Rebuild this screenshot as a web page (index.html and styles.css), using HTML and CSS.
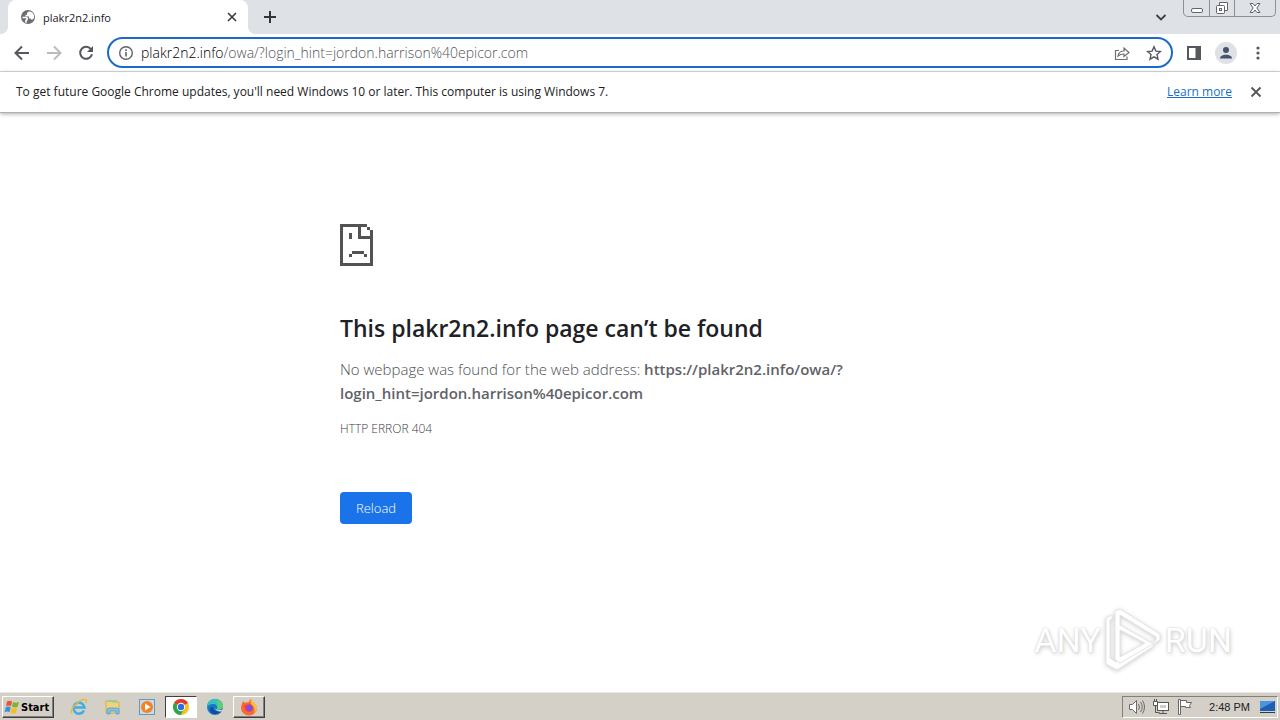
FILE: index.html
```html
<!DOCTYPE html>
<html lang="en">
<head>
<meta charset="utf-8">
<meta name="viewport" content="width=device-width, initial-scale=1">
<title>plakr2n2.info</title>
<link rel="stylesheet" href="styles.css">
</head>
<body>
<header>
  <div class="tabstrip">
    <div class="tab">
      <svg class="globe" viewBox="0 0 16 16" width="16" height="16"><circle cx="8" cy="8" r="7" fill="#6b6f73"/><path d="M2.500 8.500h3.500q2 .5 1 2.200l-1 .8v2.300" fill="none" stroke="#fff" stroke-width="1.600"/><path d="M9 2.200L7 4v1.700H5.500V7.500H9v2h1.500l1.500 1.500 2-2V6l-1.500-2.500z" fill="#fff"/></svg>
      <span class="tab-title">plakr2n2.info</span>
      <button class="icon tab-close" aria-label="Close tab"><svg viewBox="0 0 16 16" width="16" height="16"><path d="M4 4l8 8M12 4l-8 8" stroke="#3c4043" stroke-width="1.700"/></svg></button>
    </div>
    <button class="icon new-tab" aria-label="New tab"><svg viewBox="0 0 16 16" width="16" height="16"><path d="M8 2v12M2 8h12" stroke="#30343b" stroke-width="2"/></svg></button>
    <button class="icon tab-search" aria-label="Search tabs"><svg viewBox="0 0 16 16" width="16" height="16"><path d="M3.500 6L8 10.500 12.500 6" fill="none" stroke="#3c4043" stroke-width="1.800"/></svg></button>
    <div class="window-controls">
      <button aria-label="Minimize"><svg viewBox="0 0 14 14" width="14" height="14"><rect x="1.500" y="7.500" width="11" height="4" rx="1.500" fill="#fff" stroke="#61656b"/></svg></button>
      <button aria-label="Restore"><svg viewBox="0 0 14 14" width="14" height="14"><path d="M4.500 4V1.500h8v8H10" fill="#fff" stroke="#61656b"/><rect x="1.500" y="4.500" width="8" height="8" rx="1" fill="#fff" stroke="#61656b"/><rect x="4.500" y="7.500" width="2" height="2" fill="none" stroke="#61656b"/></svg></button>
      <button class="wide" aria-label="Close"><svg viewBox="0 0 14 14" width="14" height="14"><path d="M2 2.500h3L7 5l2-2.500h3L8.800 7l3.200 4.500H9L7 9l-2 2.500H2L5.200 7z" fill="#fff" stroke="#61656b"/></svg></button>
    </div>
  </div>
  <nav class="toolbar">
    <button class="icon" aria-label="Back"><svg viewBox="0 0 20 20" width="20" height="20"><path d="M17 10H4M10 3.500L3.500 10l6.500 6.500" fill="none" stroke="#55585c" stroke-width="2"/></svg></button>
    <button class="icon" aria-label="Forward"><svg viewBox="0 0 20 20" width="20" height="20"><path d="M3 10h13M10 3.500l6.500 6.500-6.500 6.500" fill="none" stroke="#b9bbbe" stroke-width="2"/></svg></button>
    <button class="icon" aria-label="Reload page"><svg viewBox="0 0 20 20" width="20" height="20"><path d="M15.200 6.500A6 6 0 1 0 16 11.200" fill="none" stroke="#55585c" stroke-width="2"/><path d="M17 3v6h-6z" fill="#55585c"/></svg></button>
    <div class="omnibox">
      <svg viewBox="0 0 16 16" width="16" height="16"><circle cx="8" cy="8" r="6.300" fill="none" stroke="#5f6368" stroke-width="1.400"/><path d="M8 7v4.500M8 4.300V6" stroke="#5f6368" stroke-width="1.600"/></svg>
      <div class="url"><label for="url">plakr2n2.info</label><input id="url" type="text" value="/owa/?login_hint=jordon.harrison%40epicor.com" spellcheck="false"></div>
      <button class="icon" aria-label="Share"><svg viewBox="0 0 16 16" width="16" height="16"><path d="M5 5.500H1.500v9h11.500v-3M4 11c.5-3.500 2.500-5 6-5V3l5 4.500-5 4V9C7.500 9 5.500 9.500 4 11z" fill="none" stroke="#6b6f73" stroke-width="1.200"/></svg></button>
      <button class="icon" aria-label="Bookmark this tab"><svg viewBox="0 0 16 16" width="16" height="16"><path d="M8 1.800l1.900 4.300 4.600.4-3.500 3.100 1 4.600L8 11.800l-4 2.400 1-4.600L1.500 6.500l4.600-.4z" fill="none" stroke="#55585c" stroke-width="1.400"/></svg></button>
    </div>
    <button class="icon" aria-label="Side panel"><svg viewBox="0 0 16 16" width="16" height="16"><path d="M1 1h14v14H1zM3 3v10h6.500V3z" fill="#55585c" fill-rule="evenodd"/></svg></button>
    <button class="icon avatar" aria-label="Profile"><svg viewBox="0 0 16 16" width="16" height="16"><circle cx="8" cy="5" r="3" fill="#46536f"/><path d="M2 13.500C2 8.500 14 8.500 14 13.500z" fill="#46536f"/></svg></button>
    <button class="icon" aria-label="Menu"><svg viewBox="0 0 16 16" width="16" height="16" fill="#55585c"><circle cx="8" cy="3" r="1.600"/><circle cx="8" cy="8" r="1.600"/><circle cx="8" cy="13" r="1.600"/></svg></button>
  </nav>
  <div class="infobar">
    <span>To get future Google Chrome updates, you'll need Windows 10 or later. This computer is using Windows 7.</span>
    <a href="#">Learn more</a>
    <button class="icon" aria-label="Dismiss"><svg viewBox="0 0 16 16" width="16" height="16"><path d="M3.500 3.500l9 9M12.500 3.500l-9 9" stroke="#55585c" stroke-width="1.900"/></svg></button>
  </div>
</header>
<main>
  <section class="error">
    <svg class="sad" viewBox="0 0 33 42" width="33" height="42" shape-rendering="crispEdges" fill="#535353"><path d="M0 0h27v3H21v9h9V6h3v36H0zM3 3v36h27V15H18V3zM27 3h3v3h-3z" fill-rule="evenodd"/><path d="M9 9h3v6H9zM12 27h12v3H12zM9 30h3v3H9zM24 30h3v3h-3z"/></svg>
    <h1>This plakr2n2.info page can’t be found</h1>
    <p>No webpage was found for the web address: <strong>https://plakr2n2.info/owa/?<wbr>login_hint=jordon.harrison%40epicor.com</strong></p>
    <div class="code">HTTP ERROR 404</div>
    <button class="reload">Reload</button>
  </section>
  <div class="watermark">
    <span>ANY</span>
    <svg viewBox="0 0 60 64" width="60" height="64" fill="#fff" stroke="#e4e4e4" stroke-width="1"><path d="M3 10l6-3v4l-2 1v38l6 4 34-20 4 4-37 24-11-6z"/><path fill-rule="evenodd" d="M12 3l5-2 40 25v6L17 55l-5-3zM17 7v10l32 18 4-3v-3zM17 22v27l25-14z"/></svg>
    <span>RUN</span>
  </div>
</main>
<footer class="taskbar">
  <button class="start"><svg viewBox="0 0 16 16" width="16" height="16"><path d="M3 2.500q2.500-1.500 5 0L7 7.200q-2.500-1.500-5 0z" fill="#e8562a"/><path d="M9 3q2.500 1.500 6 0l-1.500 5q-3 1-5.500-.5z" fill="#7ab52c"/><path d="M1.700 8.300q2.500-1.500 5 0l-1.200 5q-2.500-1.500-5 0z" fill="#3c8fd8"/><path d="M7.700 8.700q2.500 1.500 5.500.4l-1.300 5q-3 1-5.500-.5z" fill="#f8bd22"/></svg>Start</button>
  <button class="task" aria-label="Internet Explorer"><svg viewBox="0 0 18 18" width="18" height="18"><path d="M14 12.500A5.500 5.500 0 1 1 14.500 9.500H5" fill="none" stroke="#3caee8" stroke-width="2.500"/><path d="M2 15.500C-1 12 9 1 15 1.500c2 .3 1.500 2 .8 3.500" fill="none" stroke="#e9b93a" stroke-width="1.300"/></svg></button>
  <button class="task" aria-label="Explorer"><svg viewBox="0 0 18 18" width="18" height="18"><path d="M2 3h5l1 1h7v11H2z" fill="#f0d47d" stroke="#cfae55"/><path d="M4 2h9v2H4z" fill="#92cf9c"/><path d="M3 16v-4q0-2 2-2h8q2 0 2 2v4h-3v-3H6v3z" fill="#7fc1e8" stroke="#4d9ac8" stroke-width=".7"/></svg></button>
  <button class="task" aria-label="Media Player"><svg viewBox="0 0 18 18" width="18" height="18"><rect x="1.500" y="1.500" width="15" height="15" fill="#c5dcec" stroke="#6797bd"/><circle cx="9" cy="9" r="6" fill="#f5831f"/><path d="M7 5.500v7L12.500 9z" fill="#fff"/></svg></button>
  <button class="task active" aria-label="Chrome"><svg viewBox="0 0 18 18" width="18" height="18"><circle cx="9" cy="9" r="8" fill="#fbc116"/><path d="M9 9L2.070 5A8 8 0 0 1 15.930 5z" fill="#e33b2e"/><path d="M9 9L2.070 5A8 8 0 0 0 8.500 17L12.500 11z" fill="#2da44e"/><circle cx="9" cy="9" r="4.200" fill="#fff"/><circle cx="9" cy="9" r="3.200" fill="#2b6fe0"/></svg></button>
  <button class="task" aria-label="Edge"><svg viewBox="0 0 18 18" width="18" height="18"><circle cx="9" cy="9" r="8" fill="#1479c9"/><path d="M1 9A8 8 0 0 1 17 8.500c0 3-4 4-6 2.500 1-3-1-5-4-5-3 0-5 1.500-6 3z" fill="#36bfc1"/><path d="M10 3c4-1 7 2 7 5.500 0 2.500-4 3.500-6 2.500 1.200-3 1-6-1-8z" fill="#5bcf72"/><path d="M7 8.500C6 12 10 14.500 15.500 13 11 18 3 16 4 11q.5-2 3-2.500z" fill="#134a9c"/><path d="M10 8.500c-1.500 2 1 4 6 3.500l1.500-1.500V13l-2 .5c-5 0-7-2-5.500-5z" fill="#d4d0c8"/></svg></button>
  <button class="task raised" aria-label="Firefox"><svg viewBox="0 0 18 18" width="18" height="18"><path d="M2 6l1-3 2 2q2-1 4-1 0-2 2-3 1 3 3 4 3 2 3 5a8 7.500 0 0 1-16 0q0-2 1-4z" fill="#fb6a2c"/><path d="M11 1q1 3 3 4 3 2 3 5-1 4-3 5 2-6-2-8-2-2-1-6z" fill="#ffc52e"/><circle cx="9" cy="10" r="3.800" fill="#8a49d8"/><path d="M4 7q3-1 5 1-2 0-3 1 0 3 4 4-5 1-6-6z" fill="#f43d50"/></svg></button>
  <div class="tray">
    <svg viewBox="0 0 18 18" width="18" height="18" fill="#fff" stroke="#6b6b6b"><path d="M1.500 6.500h3l4-4v13l-4-4h-3z"/><path d="M10.500 6q2 3 0 6M12.500 4q3.500 5 0 10M14.500 2.500q4 6.500 0 13" fill="none"/></svg>
    <svg viewBox="0 0 18 18" width="18" height="18" fill="#fff" stroke="#555"><rect x="5.500" y="4.500" width="11" height="8"/><path d="M7 15.500h8M11 13v2M3.500 7v7.500h4" fill="none"/><path d="M1.500 3.500h4v4h-4zM2.500 1v2M4.500 1v2"/><path d="M8 7h6v3H8z" fill="#ccc" stroke="none"/></svg>
    <svg viewBox="0 0 18 18" width="18" height="18" fill="#fff" stroke="#666"><path d="M2.500 1.500h2v15h-2zM4.500 2.500h6v2h5l-2 3 1 2H9.500v-1h-5z"/></svg>
    <time>2:48 PM</time>
    <svg viewBox="0 0 18 18" width="18" height="18"><path d="M1 3h15v10H1z" fill="#1d5fb5"/><path d="M1 3h15L1 11z" fill="#4c94dd"/><path d="M1 14h15v1H1z" fill="#303b4c"/></svg>
  </div>
</footer>
</body>
</html>
```
FILE: styles.css
```css
* { box-sizing: border-box; }
body {
  margin: 0;
  min-height: 100vh;
  display: flex;
  flex-direction: column;
  background: #fff;
  color: #202124;
  font-family: "Open Sans", "Noto Sans", sans-serif;
}
svg { display: block; flex: none; }
button { font: inherit; padding: 0; border: 0; background: none; }
.icon { display: grid; place-items: center; }

.tabstrip { display: flex; height: 34px; padding-left: 8px; background: #dee1e6; }
.tab {
  position: relative;
  width: 240px;
  display: flex;
  align-items: center;
  gap: 7px;
  padding: 0 8px 0 12px;
  background: #fff;
  border-radius: 8px 8px 0 0;
}
.tab::before, .tab::after {
  content: "";
  position: absolute;
  bottom: 0;
  width: 8px;
  height: 8px;
}
.tab::before { left: -8px; background: radial-gradient(circle at 0 0, #dee1e6 8px, #fff 8px); }
.tab::after { right: -8px; background: radial-gradient(circle at 100% 0, #dee1e6 8px, #fff 8px); }
.tab-title { flex: 1; font-size: 11px; }
.new-tab { margin-left: 14px; }
.tab-search { margin-left: auto; margin-right: 14px; }
.window-controls {
  display: flex;
  align-self: flex-start;
  margin-right: 4px;
  height: 17px;
  border: 1px solid #8b8f96;
  border-top: 0;
  border-radius: 0 0 5px 5px;
}
.window-controls button { width: 25px; display: grid; place-items: center; }
.window-controls button + button { border-left: 1px solid #8b8f96; }
.window-controls .wide { width: 41px; }

.toolbar {
  display: flex;
  align-items: center;
  gap: 12px;
  height: 38px;
  padding: 0 14px 0 12px;
  border-bottom: 1px solid #dcdddf;
}
.omnibox {
  flex: 1;
  display: flex;
  align-items: center;
  gap: 16px;
  min-width: 0;
  height: 31px;
  margin-right: 1px;
  margin-left: -1px;
  padding: 0 9px;
  border: 2px solid #1b6ac9;
  border-radius: 16px;
}
.url { flex: 1; display: flex; min-width: 0; margin-left: -9px; font-size: 14px; font-weight: 300; line-height: 20px; }
.url label { color: #000; }
.url input {
  flex: 1;
  min-width: 0;
  padding: 0;
  border: 0;
  outline: 0;
  font: inherit;
  color: #505458;
  background: none;
}
.avatar { width: 22px; height: 22px; margin: 0 1px; border-radius: 50%; background: #dee1e6; }

.infobar {
  display: flex;
  align-items: center;
  gap: 16px;
  height: 41px;
  padding: 0 16px 1px;
  border-bottom: 1px solid #b0b0b0;
  box-shadow: 0 1px 4px #0005;
  font-size: 12px;
}
.infobar span { flex: 1; }
.infobar a { color: #1a6fc4; }

main { flex: 1; position: relative; }
.error { max-width: 600px; margin: 0 auto; padding-top: 111px; color: #5f6368; }
h1 { margin: 46px 0 13px; font-size: 23px; line-height: 32px; font-weight: 600; color: #202124; }
p { margin: 0; font-size: 15px; font-weight: 300; line-height: 24px; color: #4c4f53; }
strong { font-weight: 600; color: #5f6368; }
.code { margin-top: 15px; font-size: 12px; font-weight: 300; line-height: 18px; color: #3c4043; }
.reload {
  height: 32px;
  margin-top: 54px;
  padding: 0 16px;
  border-radius: 4px;
  background: #1a73e8;
  color: #fff;
  font-size: 13px;
  font-weight: 300;
}
.watermark {
  position: absolute;
  right: 48px;
  bottom: 20px;
  display: flex;
  align-items: center;
  gap: 2px;
  color: #fff;
  font: 34px Roboto, sans-serif;
  text-shadow: 0 0 2px #ccc, 1px 2px 4px #ccc;
}
.watermark svg { filter: drop-shadow(0 1px 2px #ccc); }

.taskbar {
  display: flex;
  align-items: center;
  height: 28px;
  padding: 2px 2px 1px;
  background: #d4d0c8;
  border-top: 1px solid #e8e6e1;
  font: 11px "DejaVu Sans Condensed", sans-serif;
}
.start, .raised { border: 1px solid; border-color: #fff #404040 #404040 #fff; box-shadow: inset -1px -1px #808080; }
.start { display: flex; align-items: center; gap: 1px; width: 52px; height: 22px; margin-right: 9px; padding-left: 1px; font-weight: bold; }
.task { display: grid; place-items: center; width: 32px; height: 22px; margin-right: 2px; }
.active { background: #fff; border: 1px solid; border-color: #404040 #fff #fff #404040; }
.tray {
  display: flex;
  align-items: center;
  gap: 6px;
  height: 22px;
  margin-left: auto;
  padding-left: 5px;
  border: 1px solid;
  border-color: #808080 #fff #fff #808080;
}
.tray time { margin: 0 3px 0 9px; font-family: "Liberation Sans", sans-serif; }
```
